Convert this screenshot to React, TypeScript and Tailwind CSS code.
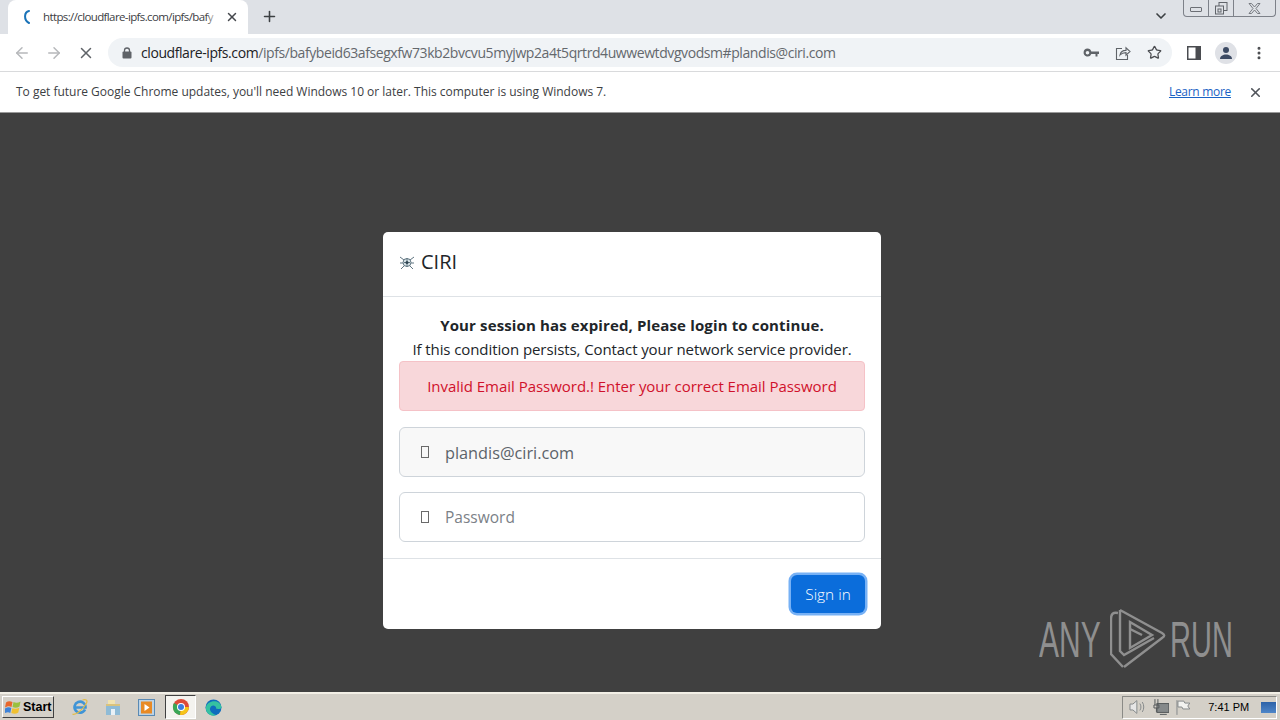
import React from 'react';
import { ArrowLeft, ArrowRight, X, Plus, ChevronDown, Star, MoreVertical } from 'lucide-react';

const UI_FONT = 'font-["Open_Sans","Noto_Sans",sans-serif]';

const LockIcon = () => (
  <svg width="10" height="12" viewBox="0 0 10 12" fill="#5f6368">
    <path d="M2.500 5V3.500a2.500 2.500 0 0 1 5 0V5" fill="none" stroke="#5f6368" strokeWidth="1.300" />
    <rect x="0.500" y="4.500" width="9" height="7" rx="1" />
  </svg>
);

const KeyIcon = () => (
  <svg width="16" height="10" viewBox="0 0 16 10" fill="#5f6368">
    <path fillRule="evenodd" d="M4.500 0.500a4 4 0 0 1 3.800 3H16v2.500h-1.500V8.500h-2V6H8.300a4 4 0 1 1-3.800-5.500zm0 2.500a1.800 1.800 0 1 0 0 3.600 1.800 1.800 0 0 0 0-3.600z" />
  </svg>
);

const ShareIcon = () => (
  <svg width="16" height="16" viewBox="0 0 16 16" fill="none" stroke="#5f6368" strokeWidth="1.1">
    <path d="M7 3.500H1.500v11h11V10" />
    <path d="M5 10c.6-3 3-4.600 6-4.600V2.800l4 3.700-4 3.700V7.600c-2.500 0-4.500.7-6 2.400z" />
  </svg>
);

const PanelIcon = () => (
  <svg width="14" height="14" viewBox="0 0 14 14">
    <rect x="0" y="0" width="14" height="14" fill="#4a4c50" />
    <rect x="1.500" y="1.500" width="7" height="11" fill="#fff" />
  </svg>
);

const AvatarIcon = () => (
  <div className="flex h-[22px] w-[22px] items-center justify-center rounded-full bg-[#dfe1e6]">
    <svg width="14" height="14" viewBox="0 0 14 14" fill="#3c4a63">
      <circle cx="7" cy="4" r="3" />
      <path d="M1 13c0-3 3-4.500 6-4.500s6 1.500 6 4.500z" />
    </svg>
  </div>
);

const WindowControls = () => (
  <div className="flex h-[17px] w-[93px] rounded-b-[4px] border border-t-0 border-[#7d8189] bg-[#dee1e6]">
    <div className="flex w-[25px] items-center justify-center border-r border-[#7d8189] pt-[3px]">
      <div className="h-[5px] w-[12px] rounded-[1px] border border-[#6c6f75]" />
    </div>
    <div className="flex w-[25px] items-center justify-center border-r border-[#7d8189]">
      <svg width="13" height="13" viewBox="0 0 13 13" fill="none" stroke="#60646a">
        <rect x="4" y="0.500" width="8" height="8" />
        <rect x="0.500" y="4" width="8" height="8" fill="#dee1e6" />
        <rect x="3" y="7" width="3" height="3" />
      </svg>
    </div>
    <div className="flex flex-1 items-center justify-center">
      <svg width="13" height="11" viewBox="0 0 13 11" fill="none" stroke="#777b81">
        <path d="M1 .5h2.500L6.500 4l3-3.500H12L8 5.500l4 5H9.500l-3-3.500-3 3.500H1l4-5z" />
      </svg>
    </div>
  </div>
);

const AnyRunMark = () => (
  <svg width="56" height="62" viewBox="0 0 56 62" fill="none" stroke="#8f8f8f" strokeWidth="2.400" className="mt-[-3px]">
    <path d="M8 6C3 5 1 7 1 12v35l12 13" />
    <path d="M10 3l42 23c3 2 3 3 0 5L14 60" />
    <path d="M10 3v41l4 4 30-17" />
    <path d="M20 15l22 13-22 13z" />
    <path d="M20 22l12 6" />
  </svg>
);

const Spinner = () => (
  <svg width="16" height="16" viewBox="0 0 16 16" fill="none">
    <path d="M9 2C4 3 3.500 11 9 14" stroke="#1a73b8" strokeWidth="2" strokeLinecap="round" />
  </svg>
);

const CiriLogo = () => (
  <svg width="16" height="16" viewBox="0 0 16 16" fill="none" stroke="#5f7480" strokeWidth="1">
    <circle cx="8" cy="8.500" r="4" fill="#dbe6ea" />
    <path d="M1 3l4 3M15 3l-4 3M1 9h3M12 9h3M2 15l3-3M14 15l-3-3M8 4v9M5 8.500h6" />
    <circle cx="8" cy="8.500" r="1.500" fill="#2f4450" stroke="none" />
  </svg>
);

const Glyph = () => <div className="h-[12px] w-[8px] border border-[#6a6a6a]" />;

const StartFlag = () => (
  <svg width="16" height="16" viewBox="0 0 16 16">
    <path d="M1 3.500C3 2 5 2 7.500 3L6.500 8C4.500 7 3 7 0 8.500z" fill="#e8672c" />
    <path d="M8.500 3C10.500 4 13 4 15.500 2.500L14.500 7.500C12 9 10 9 7.500 8z" fill="#9ac03e" />
    <path d="M0 9.500C2.500 8 4.500 8 6.300 9L5.300 14C3.500 13 2 13-1 14.500z" fill="#3d82d8" />
    <path d="M7.300 9.300C9.500 10 12 10 14.300 8.700L13.300 13.500C11 15 9 15 6.300 14z" fill="#f0c030" />
  </svg>
);

const IeIcon = () => (
  <svg width="18" height="18" viewBox="0 0 18 18" fill="none">
    <path d="M14 11.500A5.500 5.500 0 1 1 14.500 9.500H4" stroke="#3f94d6" strokeWidth="2.600" />
    <path d="M1.500 16c2 1.500 10-3 14-11 1.500-3-1-4-4-3" stroke="#e3bc44" strokeWidth="1.200" />
  </svg>
);

const FolderIcon = () => (
  <svg width="16" height="17" viewBox="0 0 16 17">
    <rect x="3" y="1" width="7" height="5" fill="#f1e3b0" />
    <path d="M1 5h14v11H1z" fill="#8fbbd6" />
    <path d="M1 5h14v2H1z" fill="#d9c27c" />
    <rect x="6" y="10" width="4" height="6" fill="#e9f1f6" />
  </svg>
);

const MediaIcon = () => (
  <svg width="17" height="17" viewBox="0 0 17 17">
    <rect x="0.500" y="0.500" width="16" height="16" fill="#bcd3e6" stroke="#5a8ab4" />
    <rect x="3" y="2.500" width="11" height="12" fill="#e88a25" />
    <path d="M6.500 5l5 3.500-5 3.500z" fill="#fff" />
  </svg>
);

const ChromeIcon = () => (
  <svg width="18" height="18" viewBox="0 0 18 18">
    <circle cx="9" cy="9" r="8" fill="#dd4b39" />
    <path d="M9 9L2 5A8 8 0 0 0 8 17z" fill="#3aa757" />
    <path d="M9 9h8A8 8 0 0 1 8 17z" fill="#f5c518" />
    <circle cx="9" cy="9" r="4" fill="#fff" />
    <circle cx="9" cy="9" r="3" fill="#3b7de0" />
  </svg>
);

const EdgeIcon = () => (
  <svg width="17" height="17" viewBox="0 0 17 17">
    <circle cx="8.500" cy="8.500" r="8" fill="#0f6cbd" />
    <path d="M1 8C2 2 14-1 16.500 8c.2 2-4 2.500-5.500 1.500 1-3-5-5-6 0-.5 3 3 6 6.500 6.500C6 18.500 0 14 1 8z" fill="#35c1a1" />
  </svg>
);

const TrayIcons = () => (
  <>
    <svg width="18" height="16" viewBox="0 0 18 16" fill="none" stroke="#85898a">
      <path d="M2 5h3l4-3.500v13L5 11H2z" fill="#e6e6e6" />
      <path d="M12 4.500c1.500 2 1.500 5 0 7M14.500 3c2 3 2 7 0 10" />
    </svg>
    <svg width="18" height="18" viewBox="0 0 18 18" fill="none" stroke="#55595a">
      <rect x="5" y="5.500" width="12" height="9" fill="#85898a" />
      <path d="M3 1v6M6 1v6M2 7h5v3H2zM4.500 10v4M8 16.500h7" />
    </svg>
    <svg width="16" height="17" viewBox="0 0 16 17" fill="none" stroke="#85898a">
      <path d="M2 1v15" />
      <path d="M3 2h6l1 2h5l-2 3 2 3H8L7 8H3z" fill="#f2f2ef" />
    </svg>
  </>
);

const App: React.FC = () => {
  return (
    <div className={`flex h-[720px] w-[1280px] flex-col overflow-hidden bg-white ${UI_FONT}`}>
      {/* Tab strip */}
      <div className="flex h-[34px] shrink-0 bg-[#dee1e6]">
        <div className="ml-[8px] flex h-[34px] w-[240px] items-center rounded-t-[8px] bg-white pl-[12px]">
          <Spinner />
          <div className="relative ml-[7px] h-[18px] w-[175px] overflow-hidden">
            <span className="block whitespace-nowrap text-[11.5px] leading-[18px] tracking-[-0.62px] text-[#3c4043]">
              https://cloudflare-ipfs.com/ipfs/bafy
            </span>
            <div className="absolute inset-y-0 right-0 w-[12px] bg-gradient-to-r from-transparent to-white" />
          </div>
          <X size={14} strokeWidth={2.5} className="ml-[7px] text-[#45484d]" />
        </div>
        <Plus size={17} strokeWidth={2.2} className="ml-[13px] mt-[8px] text-[#3c4043]" />
        <div className="flex-1" />
        <ChevronDown size={16} strokeWidth={2.5} className="mt-[8px] text-[#3c4043]" />
        <div className="ml-[14px] mr-[4px]">
          <WindowControls />
        </div>
      </div>

      {/* Toolbar */}
      <div className="flex h-[37px] shrink-0 items-center bg-white">
        <ArrowLeft size={18} className="ml-[13px] text-[#b6b8bb]" />
        <ArrowRight size={18} className="ml-[14px] text-[#b6b8bb]" />
        <X size={18} strokeWidth={2} className="ml-[14px] text-[#5f6368]" />
        <div className="ml-[13px] flex h-[29px] w-[1064px] items-center rounded-full bg-[#f0f3f6] pl-[14px]">
          <LockIcon />
          <span className="ml-[9px] whitespace-nowrap text-[14px] tracking-[-0.42px] text-[#202124]">
            cloudflare-ipfs.com
            <span className="text-[#64686d]">/ipfs/bafybeid63afsegxfw73kb2bvcvu5myjwp2a4t5qrtrd4uwwewtdvgvodsm#plandis@ciri.com</span>
          </span>
          <div className="flex-1" />
          <KeyIcon />
          <div className="ml-[16px]">
            <ShareIcon />
          </div>
          <Star size={15} strokeWidth={2} className="ml-[16px] mr-[10px] text-[#4a4c50]" />
        </div>
        <div className="ml-[15px]">
          <PanelIcon />
        </div>
        <div className="ml-[14px]">
          <AvatarIcon />
        </div>
        <MoreVertical size={16} strokeWidth={2.5} className="ml-[14px] text-[#4a4c50]" />
      </div>

      {/* Update notice */}
      <div className="flex h-[42px] shrink-0 items-center border-y border-b-[#9a9a9a] border-t-[#d9dadc] bg-white pl-[16px]">
        <span className="text-[12px] tracking-[-0.02px] text-[#3c4043]">
          To get future Google Chrome updates, you'll need Windows 10 or later. This computer is using Windows 7.
        </span>
        <div className="flex-1" />
        <a className="text-[12px] tracking-[-0.3px] text-[#1a62c4] underline">Learn more</a>
        <X size={15} strokeWidth={2.5} className="ml-[17px] mr-[17px] text-[#50545a]" />
      </div>

      {/* Page */}
      <div className="relative flex flex-1 justify-center bg-[#404040] pr-[16px]">
        <div className="mt-[119px] flex h-[397px] w-[498px] flex-col rounded-[5px] bg-white">
          <div className="flex h-[65px] items-center border-b border-[#dee2e6] pb-[4px] pl-[16px]">
            <CiriLogo />
            <span className="ml-[6px] text-[20px] text-[#212529]">CIRI</span>
          </div>

          <div className="flex flex-1 flex-col px-[16px]">
            <p className="mt-[16px] whitespace-nowrap text-center text-[15px] font-bold leading-[24px] tracking-[0.14px] text-[#212529]">
              Your session has expired, Please login to continue.
            </p>
            <p className="whitespace-nowrap text-center text-[15px] leading-[24px] tracking-[-0.09px] text-[#212529]">
              If this condition persists, Contact your network service provider.
            </p>
            <div className="flex h-[50px] items-center justify-center rounded-[4px] border border-[#f5c2c7] bg-[#f8d7da] text-[15px] tracking-[-0.03px] text-[#d0112b]">
              Invalid Email Password.! Enter your correct Email Password
            </div>

            <div className="mt-[16px] flex h-[50px] items-center rounded-[6px] border border-[#ced4da] bg-[#f8f8f8] pl-[21px]">
              <Glyph />
              <span className="ml-[16px] pt-[2px] text-[16.3px] text-[#5c636a]">plandis@ciri.com</span>
            </div>
            <div className="mt-[15px] flex h-[50px] items-center rounded-[6px] border border-[#ced4da] bg-white pl-[21px]">
              <Glyph />
              <span className="ml-[16px] pt-[2px] text-[15.5px] text-[#7b8187]">Password</span>
            </div>
          </div>

          <div className="flex h-[71px] items-center justify-end border-t border-[#dee2e6] pr-[16px]">
            <button className="h-[38px] w-[74px] rounded-[6px] bg-[#0b6ddb] pt-[1px] text-[15.4px] font-light text-white ring-[2.5px] ring-[#77b1f5]">
              Sign in
            </button>
          </div>
        </div>

        {/* Watermark */}
        <div className="absolute left-[1039px] top-[497px] flex items-center text-[#8f8f8f]">
          <span className="w-[71px] origin-left scale-x-[0.6] text-[50px] leading-none [font-family:'Liberation_Sans',sans-serif]">ANY</span>
          <AnyRunMark />
          <span className="ml-[4px] w-[61px] origin-left scale-x-[0.58] text-[50px] leading-none [font-family:'Liberation_Sans',sans-serif]">RUN</span>
        </div>
      </div>

      {/* Windows taskbar */}
      <div className="flex h-[28px] shrink-0 items-center border-t-2 border-t-[#f2efe6] bg-[#d4d0c8] font-['Liberation_Sans',sans-serif]">
        <button className="ml-[2px] flex h-[22px] w-[52px] items-center gap-[2px] border border-b-[#404040] border-l-white border-r-[#404040] border-t-white pl-[2px] text-[12.5px] font-bold text-black">
          <StartFlag />
          Start
        </button>
        <div className="ml-[17px]">
          <IeIcon />
        </div>
        <div className="ml-[16px]">
          <FolderIcon />
        </div>
        <div className="ml-[17px]">
          <MediaIcon />
        </div>
        <div className="ml-[10px] flex h-[24px] w-[31px] items-center justify-center border border-b-white border-l-[#404040] border-r-white border-t-[#404040] bg-[#f4f3ef]">
          <ChromeIcon />
        </div>
        <div className="ml-[9px]">
          <EdgeIcon />
        </div>
        <div className="flex-1" />
        <div className="mr-[3px] flex h-[23px] w-[155px] items-center gap-[6px] border border-b-white border-l-[#8a8a86] border-r-white border-t-[#8a8a86] pl-[5px]">
          <TrayIcons />
          <span className="ml-[11px] whitespace-nowrap text-[11px] text-black">7:41 PM</span>
          <div className="ml-[6px] h-[11px] w-[15px] bg-gradient-to-b from-[#2c62a8] to-[#4f86c8]" />
        </div>
      </div>
    </div>
  );
};

export default App;
